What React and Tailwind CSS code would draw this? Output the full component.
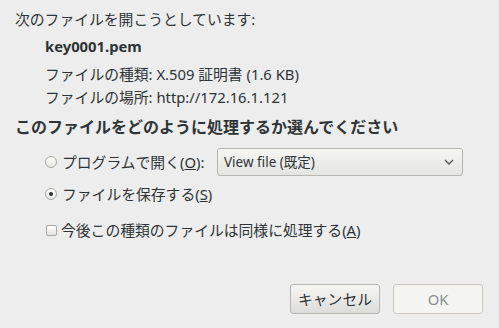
export default function App() {
  return (
    <div
      className="w-[499px] h-[328px] bg-[#ededed] text-[#2e3436] text-[14.8px] flex flex-col overflow-hidden"
      style={{ fontFamily: '"Noto Sans", "Noto Sans CJK JP", sans-serif' }}
    >
      <div className="pt-[8px] pl-[15px] flex flex-col">
        <p className="h-[22px] flex items-center">次のファイルを開こうとしています:</p>

        {/* file details */}
        <div className="pl-[30px] flex flex-col">
          <p className="h-[22px] mt-[5px] flex items-center font-bold">key0001.pem</p>
          <p className="h-[22px] mt-[6px] flex items-center">ファイルの種類: X.509 証明書 (1.6 KB)</p>
          <p className="h-[22px] mt-[1px] flex items-center">ファイルの場所: http://172.16.1.121</p>
        </div>

        <p className="h-[22px] mt-[8px] flex items-center font-bold text-[16px]">
          このファイルをどのように処理するか選んでください
        </p>

        {/* options */}
        <div className="pl-[30px] flex flex-col">
          <div className="h-[28px] mt-[10px] flex items-center">
            <span className="w-[12px] h-[12px] rounded-full border border-[#a8a8a5] bg-gradient-to-b from-[#ffffff] to-[#e4e4e2] shrink-0" />
            <span className="w-[160px] pl-[5px] shrink-0">
              プログラムで開く(<u>O</u>):
            </span>
            <div className="w-[246px] h-[28px] rounded-[3px] border border-[#b6b6b3] bg-gradient-to-b from-[#f6f6f5] to-[#e4e4e2] flex items-center justify-between pl-[6px] pr-[8px]">
              <span className="text-[13.5px]">View file (既定)</span>
              <svg width="10" height="6" viewBox="0 0 10 6" fill="none">
                <path d="M1 1l4 4 4-4" stroke="#555753" strokeWidth="1.3" />
              </svg>
            </div>
          </div>

          <div className="h-[22px] mt-[7px] flex items-center">
            <span className="w-[12px] h-[12px] rounded-full border border-[#a8a8a5] bg-gradient-to-b from-[#ffffff] to-[#e4e4e2] flex items-center justify-center shrink-0">
              <span className="w-[4px] h-[4px] rounded-full bg-[#2e3436]" />
            </span>
            <span className="pl-[5px]">
              ファイルを保存する(<u>S</u>)
            </span>
          </div>

          <div className="h-[22px] mt-[14px] flex items-center">
            <span className="ml-[1px] w-[11px] h-[11px] rounded-[2px] border border-[#a8a8a5] bg-gradient-to-b from-[#ffffff] to-[#e4e4e2] shrink-0" />
            <span className="pl-[4px]">
              今後この種類のファイルは同様に処理する(<u>A</u>)
            </span>
          </div>
        </div>
      </div>

      {/* buttons */}
      <div className="mt-auto pb-[14px] pr-[16px] flex justify-end gap-[13px]">
        <button className="w-[90px] h-[30px] rounded-[3px] border border-[#b6b6b3] bg-gradient-to-b from-[#f6f6f5] to-[#dcdcda] text-[#2e3436]">
          キャンセル
        </button>
        <button className="w-[90px] h-[30px] rounded-[3px] border border-[#cdc7c2] bg-[#f4f4f2] text-[#8b8e8f]" disabled>
          OK
        </button>
      </div>
    </div>
  );
}
